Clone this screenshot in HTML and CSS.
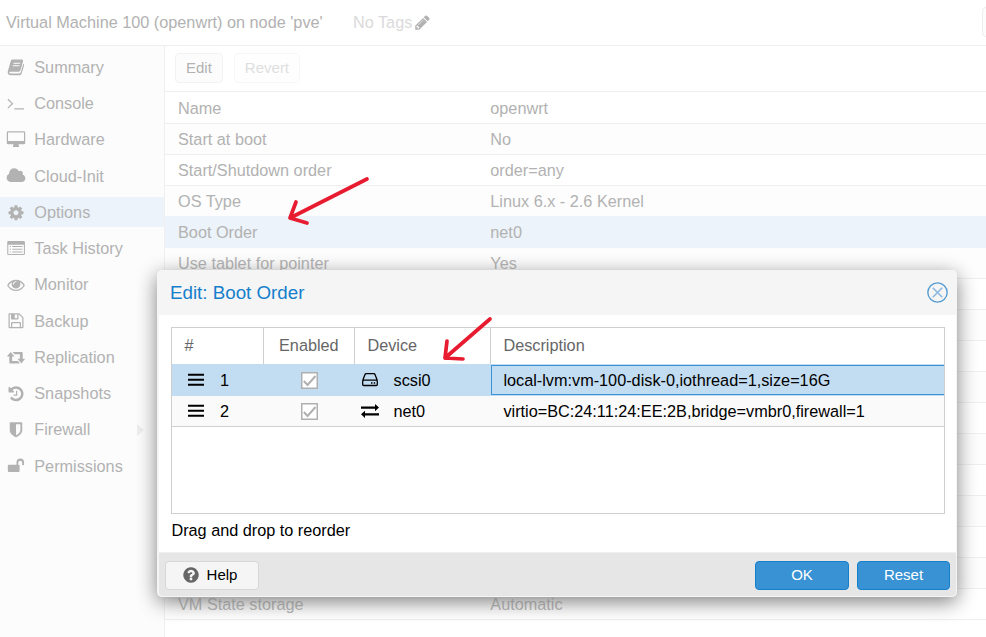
FILE: index.html
```html
<!DOCTYPE html>
<html lang="en">
<head>
<meta charset="utf-8">
<title>Virtual Machine 100 (openwrt)</title>
<link rel="stylesheet" href="styles.css">
</head>
<body>
<div class="page">
  <header class="topbar">
    <span class="vm-title">Virtual Machine 100 (openwrt) on node 'pve'</span>
    <span class="tags">No Tags</span>
    <svg class="pencil" viewBox="0 0 1792 1792"><path d="M491 1536l91-91-235-235-91 91v107h128v128h107zm523-928q0-22-22-22-10 0-17 7l-542 542q-7 7-7 17 0 22 22 22 10 0 17-7l542-542q7-7 7-17zm-54-192l416 416-832 832h-416v-416zm683 96q0 53-37 90l-166 166-416-416 166-165q36-38 90-38 53 0 91 38l235 234q37 39 37 91z"/></svg>
    <span class="top-button"></span>
  </header>
  <div class="main">
    <nav class="sidebar">
      <div class="nav-item"><svg class="ico" viewBox="0 0 20 18"><path fill-rule="evenodd" d="M6.200.6h9.800q1.800 0 1.300 1.800l-2.700 9.200q-.5 1.500-1.900 1.500H4q-1 0-.9.9.1.9 1.400.9h8.800q1.200 0 1.600-1.200l2.600-8.900q1.200.6.8 2l-2.500 8.100q-.5 1.700-2.200 1.700H4.300Q1.500 16.600 1.500 14q-.1-.8.2-1.700L4.500 2.400Q5 .6 6.200.6zM7.600 3.800l-.3 1.100h6.800l.3-1.100zM6.900 6.300l-.3 1.100h6.800l.3-1.100z"/></svg><span>Summary</span></div>
      <div class="nav-item"><svg class="ico" viewBox="0 0 20 18"><path class="line" d="M1.700 4.300l4.600 4.600-4.600 4.600M8.300 14.300h9.900"/></svg><span>Console</span></div>
      <div class="nav-item"><svg class="ico" viewBox="0 0 20 18"><path fill-rule="evenodd" d="M1.900.3h16.200q1.400 0 1.400 1.400v10.600q0 1.400-1.400 1.400h-5.500q0 1 .6 2v.8H6.800v-.8q.6-1 .6-2H1.900Q.5 13.700.5 12.300V1.700Q.5.300 1.900.3zM1.800 1.500v8.900h16.400V1.500z"/></svg><span>Hardware</span></div>
      <div class="nav-item"><svg class="ico" viewBox="0 0 2048 1792"><path d="M1984 1152q0 159-112.500 271.500t-271.500 112.500h-1088q-185 0-316.500-131.500t-131.500-316.500q0-132 71-241.500t187-163.500q-2-28-2-43 0-212 150-362t362-150q158 0 286.500 88t187.500 230q70-62 166-62 106 0 181 75t75 181q0 75-41 138 129 30 213 134.500t84 239.500z"/></svg><span>Cloud-Init</span></div>
      <div class="nav-item active"><svg class="ico" viewBox="-128 0 2048 1792"><path d="M1152 896q0-106-75-181t-181-75-181 75-75 181 75 181 181 75 181-75 75-181zm512-109v222q0 12-8 23t-20 13l-185 28q-19 54-39 91 35 50 107 138 10 12 10 25t-9 23q-27 37-99 108t-94 71q-12 0-26-9l-138-108q-44 23-91 38-16 136-29 186-7 28-36 28h-222q-14 0-24.500-8.500t-11.500-21.500l-28-184q-49-16-90-37l-141 107q-10 9-25 9-14 0-25-11-126-114-165-168-7-10-7-23 0-12 8-23 15-21 51-66.500t54-70.500q-27-50-41-99l-183-27q-13-2-21-12.500t-8-23.500v-222q0-12 8-23t19-13l186-28q14-46 39-92-40-57-107-138-10-12-10-24 0-10 9-23 26-36 98.500-107.500t94.500-71.500q13 0 26 10l138 107q44-23 91-38 16-136 29-186 7-28 36-28h222q14 0 24.500 8.500t11.500 21.500l28 184q49 16 90 37l142-107q9-9 24-9 13 0 25 10 129 119 165 170 7 8 7 22 0 12-8 23-15 21-51 66.500t-54 70.500q26 50 41 98l183 28q13 2 21 12.500t8 23.500z"/></svg><span>Options</span></div>
      <div class="nav-item"><svg class="ico" viewBox="0 0 20 18"><path fill-rule="evenodd" d="M2.300 1h15.600q1.300 0 1.300 1.300v11.900q0 1.300-1.300 1.300H2.300Q1 15.500 1 14.200V2.300Q1 1 2.300 1zM2.100 4.800v9.600h16V4.800zM3.600 6.200h1.200v1.100H3.600zM6.100 6.200h10.500v1.100H6.100zM3.600 8.900h1.200V10H3.600zM6.100 8.900h10.500V10H6.100zM3.600 11.700h1.200v1.100H3.600zM6.100 11.700h10.500v1.100H6.100z"/></svg><span>Task History</span></div>
      <div class="nav-item"><svg class="ico" viewBox="-128 0 2048 1792"><path d="M1664 960q-152-236-381-353 61 104 61 225 0 185-131.500 316.500t-316.500 131.500-316.500-131.500-131.500-316.500q0-121 61-225-229 117-381 353 133 205 333.500 326.500t434.500 121.500 434.500-121.500 333.500-326.500zm-720-384q0-20-14-34t-34-14q-125 0-214.500 89.500t-89.500 214.500q0 20 14 34t34 14 34-14 14-34q0-86 61-147t147-61q20 0 34-14t14-34zm848 384q0 34-20 69-140 230-376.500 368.500t-499.500 138.500-499.500-139-376.500-368q-20-35-20-69t20-69q140-229 376.500-368t499.500-139 499.500 139 376.500 368q20 35 20 69z"/></svg><span>Monitor</span></div>
      <div class="nav-item"><svg class="ico" viewBox="-128 0 2048 1792"><path d="M512 1536h768v-384h-768v384zm896 0h128v-896q0-14-10-38.500t-20-34.500l-281-281q-10-10-34-20t-39-10v416q0 40-28 68t-68 28h-576q-40 0-68-28t-28-68v-416h-128v1280h128v-416q0-40 28-68t68-28h832q40 0 68 28t28 68v416zm-384-928v-320q0-13-9.500-22.500t-22.500-9.500h-192q-13 0-22.500 9.500t-9.500 22.500v320q0 13 9.500 22.500t22.500 9.500h192q13 0 22.500-9.500t9.500-22.500zm640 32v928q0 40-28 68t-68 28h-1344q-40 0-68-28t-28-68v-1344q0-40 28-68t68-28h928q40 0 88 20t76 48l280 280q28 28 48 76t20 88z"/></svg><span>Backup</span></div>
      <div class="nav-item"><svg class="ico" viewBox="0 0 20 18"><path d="M4.500 3l4 4.700H6v4.600h6l2 2.500H4q-.9 0-.9-.9V7.700H.6zM6.500 3H16q.9 0 .9.900v6.200h2.500l-3.900 4.700-4-4.700H14V5.500H8.500z"/></svg><span>Replication</span></div>
      <div class="nav-item"><svg class="ico" viewBox="-128 0 2048 1792"><path d="M1664 896q0 156-61 298t-164 245-245 164-298 61q-172 0-327-72.500t-264-204.500q-7-10-6.500-22.500t8.500-20.500l137-138q10-9 25-9 16 2 23 12 73 95 179 147t225 52q104 0 198.500-40.500t163.500-109.500 109.500-163.500 40.500-198.500-40.500-198.500-109.500-163.500-163.500-109.500-198.500-40.500q-98 0-188 35.500t-160 101.500l137 138q31 30 14 69-17 40-59 40h-448q-26 0-45-19t-19-45v-448q0-42 40-59 39-17 69 14l130 129q107-101 244.500-156.500t284.500-55.500q156 0 298 61t245 164 164 245 61 298zm-640-288v448q0 14-9 23t-23 9h-320q-14 0-23-9t-9-23v-64q0-14 9-23t23-9h224v-352q0-14 9-23t23-9h64q14 0 23 9t9 23z"/></svg><span>Snapshots</span></div>
      <div class="nav-item"><svg class="ico" viewBox="-128 0 2048 1792"><path d="M1344 960v-640h-448v1137q119-63 213-137 235-184 235-360zm192-768v768q0 86-33.500 170.500t-83 150-118 127.500-126.500 103-121 77.500-89.500 49.500-42.500 20q-12 6-26 6t-26-6q-16-7-42.500-20t-89.500-49.500-121-77.500-126.500-103-118-127.500-83-150-33.500-170.500v-768q0-26 19-45t45-19h1152q26 0 45 19t19 45z"/></svg><span>Firewall</span><i class="caret"></i></div>
      <div class="nav-item"><svg class="ico" viewBox="0 0 20 18"><path d="M2.600 8h7.900V5.400a3.900 3.900 0 0 1 7.800 0v2.300q0 .7-.7.700h-.6q-.7 0-.7-.7V5.400a2 2 0 0 0-3.900 0V8h.3q1 0 1 1v5.500q0 1-1 1H2.600q-1 0-1-1V9q0-1 1-1z"/></svg><span>Permissions</span></div>
    </nav>
    <section class="content">
      <div class="toolbar"><span class="tool">Edit</span><span class="tool off">Revert</span></div>
      <div class="rows">
        <div class="row"><span>Name</span><span>openwrt</span></div>
        <div class="row"><span>Start at boot</span><span>No</span></div>
        <div class="row"><span>Start/Shutdown order</span><span>order=any</span></div>
        <div class="row before-selected"><span>OS Type</span><span>Linux 6.x - 2.6 Kernel</span></div>
        <div class="row selected"><span>Boot Order</span><span>net0</span></div>
        <div class="row"><span>Use tablet for pointer</span><span>Yes</span></div>
        <div class="row"></div>
        <div class="row"></div>
        <div class="row"></div>
        <div class="row"></div>
        <div class="row"></div>
        <div class="row"></div>
        <div class="row"></div>
        <div class="row"></div>
        <div class="row"></div>
        <div class="row"></div>
        <div class="row"><span>VM State storage</span><span>Automatic</span></div>
      </div>
    </section>
  </div>
</div>

<div class="dialog">
  <div class="dialog-head">
    <span>Edit: Boot Order</span>
    <svg class="close" viewBox="0 0 20 20"><circle cx="10" cy="10" r="9.200"/><path d="M5.500 5.500l9 9M14.500 5.500l-9 9"/></svg>
  </div>
  <div class="dialog-body">
    <div class="grid">
      <div class="grid-row grid-head"><span>#</span><span>Enabled</span><span>Device</span><span>Description</span></div>
      <div class="grid-row picked">
        <span class="num"><svg class="bars" viewBox="0 0 16 14"><path d="M0 .7h16v2.100H0zM0 5.700h16v2.100H0zM0 10.700h16v2.100H0z"/></svg>1</span>
        <span class="check"><svg viewBox="0 0 17 17"><rect x=".75" y=".75" width="15.500" height="15.500"/><path d="M2.800 9l3.800 4L14.500 4"/></svg></span>
        <span class="dev"><svg viewBox="0 0 18 16"><path class="thin" d="M1.700 8.500L4 2.500q.3-.8 1.100-.8h7.800q.8 0 1.100.8l2.300 6M2.700 8.200h12.600q1 0 1 1v3.300q0 1-1 1H2.700q-1 0-1-1V9.200q0-1 1-1z"/><path d="M10 10.200h1.500v1.500H10zM12.700 10.200h1.500v1.500h-1.500z"/></svg>scsi0</span>
        <span class="desc">local-lvm:vm-100-disk-0,iothread=1,size=16G</span>
      </div>
      <div class="grid-row second">
        <span class="num"><svg class="bars" viewBox="0 0 16 14"><path d="M0 .7h16v2.100H0zM0 5.700h16v2.100H0zM0 10.700h16v2.100H0z"/></svg>2</span>
        <span class="check"><svg viewBox="0 0 17 17"><rect x=".75" y=".75" width="15.500" height="15.500"/><path d="M2.800 9l3.800 4L14.500 4"/></svg></span>
        <span class="dev"><svg viewBox="0 0 18 16"><path d="M0 3.500h14V1l4 3.600-4 3.600V5.700H0zM18 10.200H4V7.700L0 11.300l4 3.600v-2.500h14z"/></svg>net0</span>
        <span class="desc">virtio=BC:24:11:24:EE:2B,bridge=vmbr0,firewall=1</span>
      </div>
    </div>
    <div class="hint">Drag and drop to reorder</div>
  </div>
  <div class="dialog-foot">
    <span class="btn help"><svg viewBox="0 0 1792 1792"><path d="M1024 1376v-192q0-14-9-23t-23-9h-192q-14 0-23 9t-9 23v192q0 14 9 23t23 9h192q14 0 23-9t9-23zm256-672q0-88-55.500-163t-138.500-116-170-41q-243 0-371 213-15 24 8 42l132 100q7 6 19 6 16 0 25-12 53-68 86-92 34-24 86-24 48 0 85.500 26t37.500 59q0 38-20 61t-68 45q-63 28-115.500 86.500t-52.500 125.500v36q0 14 9 23t23 9h192q14 0 23-9t9-23q0-19 21.500-49.500t54.500-49.500q32-18 49-28.500t46-35 44.500-48 28-60.500 12.500-81zm384 192q0 209-103 385.500t-279.500 279.500-385.500 103-385.500-103-279.500-279.500-103-385.500 103-385.500 279.500-279.500 385.500-103 385.500 103 279.500 279.500 103 385.500z"/></svg>Help</span>
    <span class="btn primary ok">OK</span>
    <span class="btn primary reset">Reset</span>
  </div>
</div>

<svg class="arrows" viewBox="0 0 986 637"><path d="M367 179L290 218M296 202L290 218L307 223"/><path d="M490 319L445 358M447 341L445 358L463 359"/></svg>
</body>
</html>
```
FILE: styles.css
```css
* { box-sizing: border-box; }
body {
  margin: 0;
  width: 986px;
  height: 637px;
  overflow: hidden;
  background: #fff;
  color: #b2b2b2;
  font-family: "Liberation Sans", Arial, sans-serif;
  font-size: 16.25px;
  white-space: nowrap;
}
svg { fill: currentColor; display: block; flex: none; }
.page { height: 637px; display: flex; flex-direction: column; }

.topbar {
  height: 46px;
  flex: none;
  display: flex;
  align-items: center;
  padding-left: 6px;
  overflow: hidden;
  border-bottom: 1px solid #efefef;
}
.vm-title { width: 347px; flex: none; }
.tags { color: #dadada; flex: none; width: 60px; }
.pencil { width: 17px; height: 17px; margin-left: 1px; }
.top-button {
  width: 40px;
  height: 30px;
  margin-left: 551px;
  margin-top: -1px;
  flex: none;
  border: 1px solid #eee;
  border-radius: 4px;
  background: #fcfcfc;
}

.main { flex: 1; display: flex; min-height: 0; }
.sidebar {
  width: 165px;
  flex: none;
  padding-top: 6.3px;
  display: flex;
  flex-direction: column;
  gap: 6.25px;
  background: #fcfcfc;
  border-right: 1px solid #efefef;
}
.nav-item {
  height: 30px;
  flex: none;
  display: flex;
  align-items: center;
  padding-left: 5.7px;
  gap: 8.6px;
}
.nav-item.active { background: #ecf3fa; }
.ico { width: 20px; height: 17.5px; }
.ico .line { fill: none; stroke: currentColor; stroke-width: 1.3; }
.caret {
  margin-left: auto;
  margin-right: 20px;
  border-left: 7px solid #eee;
  border-top: 6px solid transparent;
  border-bottom: 6px solid transparent;
}

.content { flex: 1; min-width: 0; }
.toolbar {
  height: 46px;
  display: flex;
  align-items: center;
  gap: 11px;
  padding: 0 0 2px 10px;
  border-bottom: 1px solid #efefef;
}
.tool {
  height: 30px;
  padding: 0 10px;
  display: flex;
  align-items: center;
  font-size: 15px;
  border: 1px solid #f2f2f2;
  border-radius: 4px;
  background: #fcfcfc;
}
.tool.off { color: #dedede; border-color: #f7f7f7; background: #fefefe; }
.row {
  height: 31px;
  display: grid;
  grid-template-columns: 312.3px 1fr;
  align-items: center;
  padding-left: 13px;
  border-bottom: 1px solid #efefef;
}
.row:first-child { height: 32px; padding-top: 1px; }
.row:nth-child(even) { background: #fdfdfd; }
.row.before-selected { border-color: #ecf3fa; }
.row.selected { background: #ecf3fa; border-color: #ecf3fa; }

.dialog {
  position: absolute;
  left: 157px;
  top: 270px;
  width: 800px;
  height: 327px;
  display: flex;
  flex-direction: column;
  border: solid #f5f5f5;
  border-width: 0 1px 1px 2px;
  border-radius: 5px;
  background: #fff;
  color: #000;
  box-shadow: 0 5px 20px #808080;
}
.dialog-head {
  height: 45px;
  display: flex;
  align-items: center;
  justify-content: space-between;
  padding: 0 8px 0 11px;
  border-radius: 4px 4px 0 0;
  background: #f5f5f5;
  color: #157fcc;
  font-size: 18.75px;
}
.close { width: 21px; height: 21px; fill: none; stroke: #559bd1; stroke-width: 1.3; }
.close path { stroke: #8db9e0; stroke-width: 1.6; }
.dialog-body { flex: 1; padding: 12px 11px 0 12px; }
.grid { height: 187px; border: 1px solid #cfcfcf; }
.grid-row {
  height: 31px;
  display: grid;
  grid-template-columns: 92px 91px 136px 1fr;
}
.grid-row > span { display: flex; align-items: center; }
.grid-head { height: 36px; color: #666; }
.grid-head > span { padding: 0 0 1px 12.4px; border-right: 1px solid #cfcfcf; }
.grid-head > span:nth-child(2) { padding-left: 15px; }
.grid-head > span:last-child { border: 0; }
.picked { height: 32px; background: #c2dcf1; }
.second { background: #fafafa; border-bottom: 1px solid #cfcfcf; }
.num { padding-left: 16px; gap: 16px; }
.bars { width: 16px; height: 14px; }
.check { justify-content: center; }
.check svg { width: 17px; height: 17px; fill: #fff; stroke: #b0b0b0; stroke-width: 1.5; }
.check path { fill: none; stroke-width: 2; }
.dev { padding-left: 6px; gap: 14.5px; }
.dev svg { width: 18px; height: 16px; }
.dev .thin { fill: none; stroke: currentColor; stroke-width: 1.3; }
.desc { padding-left: 12.4px; }
.picked .desc { margin: 1px 0; padding-left: 11.4px; border: 1px solid #3892d4; border-right: 0; }
.hint { margin-top: 7px; padding-left: 0.4px; }
.dialog-foot {
  height: 44px;
  display: flex;
  align-items: center;
  padding: 2px 6px 0;
  border-top: 1px solid #f0f0f0;
  border-radius: 0 0 4px 4px;
  background: #e6e6e6;
}
.btn {
  height: 29px;
  width: 94px;
  padding-bottom: 2px;
  display: flex;
  align-items: center;
  justify-content: center;
  font-size: 15px;
  border: 1px solid #d8d8d8;
  border-radius: 4px;
  background: #f5f5f5;
}
.help { gap: 7px; padding-right: 5px; }
.help svg { width: 18px; height: 18px; color: #666; }
.primary { color: #fff; background: #3892d4; border-color: #157fcc; }
.ok { margin-left: auto; }
.reset { width: 93px; margin-left: 8px; }
.arrows {
  position: absolute;
  left: 0;
  top: 0;
  width: 986px;
  height: 637px;
  fill: none;
  stroke: #e81c30;
  stroke-width: 3.7;
  stroke-linecap: round;
  stroke-linejoin: round;
}
```
